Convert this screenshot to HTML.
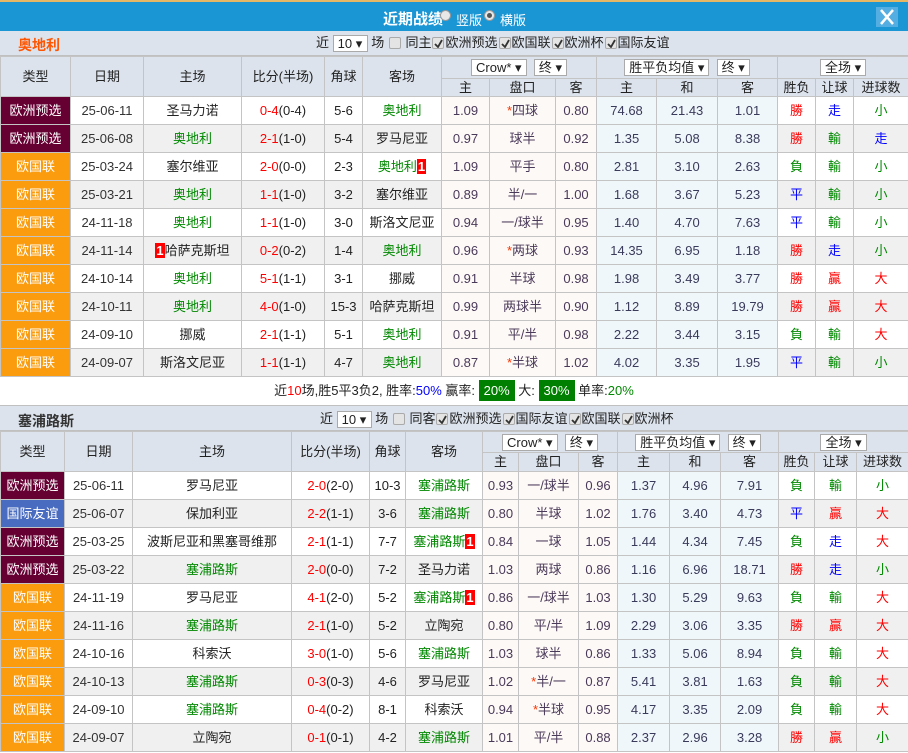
<!DOCTYPE html>
<html><head><meta charset="utf-8"><style>
*{margin:0;padding:0;box-sizing:border-box}
body{width:908px;height:753px;overflow:hidden;background:#fff;font-family:"Liberation Sans","Noto Sans CJK SC",sans-serif;font-size:13px;color:#222;position:relative}
.title{position:absolute;left:0;top:0;width:908px;height:31px;background:#1b96d5;border-top:2px solid #e6b865;color:#fff}
.title .t{position:absolute;left:383px;top:6px;font-weight:bold;font-size:15px}
.radio{position:absolute;width:11px;height:11px;border-radius:50%;background:#e8e8e8;border:1px solid #999;top:8px}
.radio.on::after{content:"";position:absolute;left:2px;top:2px;width:5px;height:5px;border-radius:50%;background:#555}
.title .l{position:absolute;top:8px;font-size:13px}
.close{position:absolute;left:876px;top:5px;width:22px;height:20px;background:#55aee2}
.sec{position:absolute;left:0;width:908px;background:#dce3ec;border-bottom:1px solid #c0c0c0}
.team{position:absolute;left:18px;font-weight:bold;font-size:14px}
.ctl{position:absolute;font-size:13px;white-space:nowrap;color:#222;line-height:18px}
.sel{display:inline-block;background:#fff;border:1px solid #aaa;height:17px;line-height:15px;padding:0 4px;vertical-align:middle;font-size:13px}
.cb{display:inline-block;width:12px;height:12px;border:1px solid #aaa;background:#e4e4e4;border-radius:2px;vertical-align:-2px;margin:0 1px;position:relative}
.cb svg{position:absolute;left:1px;top:1px}
table{position:absolute;left:0;width:908px;border-collapse:collapse;table-layout:fixed}
td,th{border:1px solid #c4c4c4;text-align:center;font-weight:normal;white-space:nowrap;overflow:hidden;padding:0;line-height:16px}
th{background:#dce3ec;color:#222}
tr.d td{height:28px}
tr.e td{background:#f0f0f0}
td.a{background:#fdf9f6!important;color:#4a3a5a}
td.u{background:#f0f7fb!important;color:#3a3a5a}
.ty1{background:#660033!important;color:#fff}
.ty2{background:#fa9c0e!important;color:#fff}
.ty3{background:#4a6cc0!important;color:#fff}
.r{color:#f00}.g{color:#080}.b{color:#00f}.n{color:#333}
.one{background:#f00;color:#fff;font-weight:bold;padding:0 1px}
.st{color:#f30}
.sum{position:absolute;left:0;top:377px;width:908px;height:28px;line-height:28px;text-align:center;font-size:13px}
.gb{background:#008000;color:#fff;padding:3px 5px}
</style></head><body>
<div class="title"><span class="t">近期战绩</span><span class="radio" style="left:440px"></span><span class="l" style="left:456px">竖版</span><span class="radio on" style="left:484px"></span><span class="l" style="left:500px">横版</span>
<div class="close"><svg width="22" height="20"><path d="M5 3L17 17M17 3L5 17" stroke="#fff" stroke-width="2.5"/></svg></div></div>

<div class="sec" style="top:31px;height:25px"><span class="team" style="top:4px;color:#f50">奥地利</span>
<div class="ctl" style="left:316px;top:3px">近 <span class="sel" style="width:35px">10 ▾</span> 场 <span class="cb"></span> 同主<span class="cb"><svg width="9" height="9"><path d="M1 5L4 8L8 1" stroke="#333" stroke-width="1.8" fill="none"/></svg></span>欧洲预选<span class="cb"><svg width="9" height="9"><path d="M1 5L4 8L8 1" stroke="#333" stroke-width="1.8" fill="none"/></svg></span>欧国联<span class="cb"><svg width="9" height="9"><path d="M1 5L4 8L8 1" stroke="#333" stroke-width="1.8" fill="none"/></svg></span>欧洲杯<span class="cb"><svg width="9" height="9"><path d="M1 5L4 8L8 1" stroke="#333" stroke-width="1.8" fill="none"/></svg></span>国际友谊</div></div>

<table style="top:56px">
<colgroup><col style="width:70px"><col style="width:73px"><col style="width:98px"><col style="width:83px"><col style="width:38px"><col style="width:79px"><col style="width:48px"><col style="width:66px"><col style="width:41px"><col style="width:60px"><col style="width:61px"><col style="width:60px"><col style="width:38px"><col style="width:38px"><col style="width:55px"></colgroup>
<tr style="height:22px"><th rowspan="2" style="height:40px">类型</th><th rowspan="2">日期</th><th rowspan="2">主场</th><th rowspan="2">比分(半场)</th><th rowspan="2">角球</th><th rowspan="2">客场</th><th colspan="3" style="height:22px"><span class="sel">Crow* ▾</span>&nbsp;&nbsp;<span class="sel">终 ▾</span></th><th colspan="3"><span class="sel">胜平负均值 ▾</span>&nbsp;&nbsp;<span class="sel">终 ▾</span></th><th colspan="3"><span class="sel">全场 ▾</span></th></tr>
<tr style="height:18px"><th style="height:18px">主</th><th>盘口</th><th>客</th><th>主</th><th>和</th><th>客</th><th>胜负</th><th>让球</th><th>进球数</th></tr>
<tr class="d"><td class="ty1">欧洲预选</td><td class="n">25-06-11</td><td>圣马力诺</td><td><span class="r">0-4</span>(0-4)</td><td>5-6</td><td class="g">奥地利</td><td class="a">1.09</td><td class="a"><span class="st">*</span>四球</td><td class="a">0.80</td><td class="u">74.68</td><td class="u">21.43</td><td class="u">1.01</td><td class="r">勝</td><td class="b">走</td><td class="g">小</td></tr>
<tr class="d e"><td class="ty1">欧洲预选</td><td class="n">25-06-08</td><td class="g">奥地利</td><td><span class="r">2-1</span>(1-0)</td><td>5-4</td><td>罗马尼亚</td><td class="a">0.97</td><td class="a">球半</td><td class="a">0.92</td><td class="u">1.35</td><td class="u">5.08</td><td class="u">8.38</td><td class="r">勝</td><td class="g">輸</td><td class="b">走</td></tr>
<tr class="d"><td class="ty2">欧国联</td><td class="n">25-03-24</td><td>塞尔维亚</td><td><span class="r">2-0</span>(0-0)</td><td>2-3</td><td class="g">奥地利<span class="one">1</span></td><td class="a">1.09</td><td class="a">平手</td><td class="a">0.80</td><td class="u">2.81</td><td class="u">3.10</td><td class="u">2.63</td><td class="g">負</td><td class="g">輸</td><td class="g">小</td></tr>
<tr class="d e"><td class="ty2">欧国联</td><td class="n">25-03-21</td><td class="g">奥地利</td><td><span class="r">1-1</span>(1-0)</td><td>3-2</td><td>塞尔维亚</td><td class="a">0.89</td><td class="a">半/一</td><td class="a">1.00</td><td class="u">1.68</td><td class="u">3.67</td><td class="u">5.23</td><td class="b">平</td><td class="g">輸</td><td class="g">小</td></tr>
<tr class="d"><td class="ty2">欧国联</td><td class="n">24-11-18</td><td class="g">奥地利</td><td><span class="r">1-1</span>(1-0)</td><td>3-0</td><td>斯洛文尼亚</td><td class="a">0.94</td><td class="a">一/球半</td><td class="a">0.95</td><td class="u">1.40</td><td class="u">4.70</td><td class="u">7.63</td><td class="b">平</td><td class="g">輸</td><td class="g">小</td></tr>
<tr class="d e"><td class="ty2">欧国联</td><td class="n">24-11-14</td><td><span class="one">1</span>哈萨克斯坦</td><td><span class="r">0-2</span>(0-2)</td><td>1-4</td><td class="g">奥地利</td><td class="a">0.96</td><td class="a"><span class="st">*</span>两球</td><td class="a">0.93</td><td class="u">14.35</td><td class="u">6.95</td><td class="u">1.18</td><td class="r">勝</td><td class="b">走</td><td class="g">小</td></tr>
<tr class="d"><td class="ty2">欧国联</td><td class="n">24-10-14</td><td class="g">奥地利</td><td><span class="r">5-1</span>(1-1)</td><td>3-1</td><td>挪威</td><td class="a">0.91</td><td class="a">半球</td><td class="a">0.98</td><td class="u">1.98</td><td class="u">3.49</td><td class="u">3.77</td><td class="r">勝</td><td class="r">贏</td><td class="r">大</td></tr>
<tr class="d e"><td class="ty2">欧国联</td><td class="n">24-10-11</td><td class="g">奥地利</td><td><span class="r">4-0</span>(1-0)</td><td>15-3</td><td>哈萨克斯坦</td><td class="a">0.99</td><td class="a">两球半</td><td class="a">0.90</td><td class="u">1.12</td><td class="u">8.89</td><td class="u">19.79</td><td class="r">勝</td><td class="r">贏</td><td class="r">大</td></tr>
<tr class="d"><td class="ty2">欧国联</td><td class="n">24-09-10</td><td>挪威</td><td><span class="r">2-1</span>(1-1)</td><td>5-1</td><td class="g">奥地利</td><td class="a">0.91</td><td class="a">平/半</td><td class="a">0.98</td><td class="u">2.22</td><td class="u">3.44</td><td class="u">3.15</td><td class="g">負</td><td class="g">輸</td><td class="r">大</td></tr>
<tr class="d e"><td class="ty2">欧国联</td><td class="n">24-09-07</td><td>斯洛文尼亚</td><td><span class="r">1-1</span>(1-1)</td><td>4-7</td><td class="g">奥地利</td><td class="a">0.87</td><td class="a"><span class="st">*</span>半球</td><td class="a">1.02</td><td class="u">4.02</td><td class="u">3.35</td><td class="u">1.95</td><td class="b">平</td><td class="g">輸</td><td class="g">小</td></tr>
</table>

<div class="sum">近<span class="r">10</span>场,胜5平3负2, 胜率:<span class="b">50%</span> 赢率: <span class="gb">20%</span> 大: <span class="gb">30%</span> 单率:<span class="g">20%</span></div>

<div class="sec" style="top:405px;height:26px;border-top:1px solid #c0c0c0"><span class="team" style="top:5px;color:#333">塞浦路斯</span>
<div class="ctl" style="left:320px;top:4px">近 <span class="sel" style="width:35px">10 ▾</span> 场 <span class="cb"></span> 同客<span class="cb"><svg width="9" height="9"><path d="M1 5L4 8L8 1" stroke="#333" stroke-width="1.8" fill="none"/></svg></span>欧洲预选<span class="cb"><svg width="9" height="9"><path d="M1 5L4 8L8 1" stroke="#333" stroke-width="1.8" fill="none"/></svg></span>国际友谊<span class="cb"><svg width="9" height="9"><path d="M1 5L4 8L8 1" stroke="#333" stroke-width="1.8" fill="none"/></svg></span>欧国联<span class="cb"><svg width="9" height="9"><path d="M1 5L4 8L8 1" stroke="#333" stroke-width="1.8" fill="none"/></svg></span>欧洲杯</div></div>

<table style="top:431px">
<colgroup><col style="width:64px"><col style="width:68px"><col style="width:159px"><col style="width:78px"><col style="width:36px"><col style="width:77px"><col style="width:36px"><col style="width:60px"><col style="width:39px"><col style="width:52px"><col style="width:51px"><col style="width:58px"><col style="width:36px"><col style="width:42px"><col style="width:52px"></colgroup>
<tr style="height:21px"><th rowspan="2" style="height:40px">类型</th><th rowspan="2">日期</th><th rowspan="2">主场</th><th rowspan="2">比分(半场)</th><th rowspan="2">角球</th><th rowspan="2">客场</th><th colspan="3" style="height:21px"><span class="sel">Crow* ▾</span>&nbsp;&nbsp;<span class="sel">终 ▾</span></th><th colspan="3"><span class="sel">胜平负均值 ▾</span>&nbsp;&nbsp;<span class="sel">终 ▾</span></th><th colspan="3"><span class="sel">全场 ▾</span></th></tr>
<tr style="height:19px"><th style="height:19px">主</th><th>盘口</th><th>客</th><th>主</th><th>和</th><th>客</th><th>胜负</th><th>让球</th><th>进球数</th></tr>
<tr class="d"><td class="ty1">欧洲预选</td><td class="n">25-06-11</td><td>罗马尼亚</td><td><span class="r">2-0</span>(2-0)</td><td>10-3</td><td class="g">塞浦路斯</td><td class="a">0.93</td><td class="a">一/球半</td><td class="a">0.96</td><td class="u">1.37</td><td class="u">4.96</td><td class="u">7.91</td><td class="g">負</td><td class="g">輸</td><td class="g">小</td></tr>
<tr class="d e"><td class="ty3">国际友谊</td><td class="n">25-06-07</td><td>保加利亚</td><td><span class="r">2-2</span>(1-1)</td><td>3-6</td><td class="g">塞浦路斯</td><td class="a">0.80</td><td class="a">半球</td><td class="a">1.02</td><td class="u">1.76</td><td class="u">3.40</td><td class="u">4.73</td><td class="b">平</td><td class="r">贏</td><td class="r">大</td></tr>
<tr class="d"><td class="ty1">欧洲预选</td><td class="n">25-03-25</td><td>波斯尼亚和黑塞哥维那</td><td><span class="r">2-1</span>(1-1)</td><td>7-7</td><td class="g">塞浦路斯<span class="one">1</span></td><td class="a">0.84</td><td class="a">一球</td><td class="a">1.05</td><td class="u">1.44</td><td class="u">4.34</td><td class="u">7.45</td><td class="g">負</td><td class="b">走</td><td class="r">大</td></tr>
<tr class="d e"><td class="ty1">欧洲预选</td><td class="n">25-03-22</td><td class="g">塞浦路斯</td><td><span class="r">2-0</span>(0-0)</td><td>7-2</td><td>圣马力诺</td><td class="a">1.03</td><td class="a">两球</td><td class="a">0.86</td><td class="u">1.16</td><td class="u">6.96</td><td class="u">18.71</td><td class="r">勝</td><td class="b">走</td><td class="g">小</td></tr>
<tr class="d"><td class="ty2">欧国联</td><td class="n">24-11-19</td><td>罗马尼亚</td><td><span class="r">4-1</span>(2-0)</td><td>5-2</td><td class="g">塞浦路斯<span class="one">1</span></td><td class="a">0.86</td><td class="a">一/球半</td><td class="a">1.03</td><td class="u">1.30</td><td class="u">5.29</td><td class="u">9.63</td><td class="g">負</td><td class="g">輸</td><td class="r">大</td></tr>
<tr class="d e"><td class="ty2">欧国联</td><td class="n">24-11-16</td><td class="g">塞浦路斯</td><td><span class="r">2-1</span>(1-0)</td><td>5-2</td><td>立陶宛</td><td class="a">0.80</td><td class="a">平/半</td><td class="a">1.09</td><td class="u">2.29</td><td class="u">3.06</td><td class="u">3.35</td><td class="r">勝</td><td class="r">贏</td><td class="r">大</td></tr>
<tr class="d"><td class="ty2">欧国联</td><td class="n">24-10-16</td><td>科索沃</td><td><span class="r">3-0</span>(1-0)</td><td>5-6</td><td class="g">塞浦路斯</td><td class="a">1.03</td><td class="a">球半</td><td class="a">0.86</td><td class="u">1.33</td><td class="u">5.06</td><td class="u">8.94</td><td class="g">負</td><td class="g">輸</td><td class="r">大</td></tr>
<tr class="d e"><td class="ty2">欧国联</td><td class="n">24-10-13</td><td class="g">塞浦路斯</td><td><span class="r">0-3</span>(0-3)</td><td>4-6</td><td>罗马尼亚</td><td class="a">1.02</td><td class="a"><span class="st">*</span>半/一</td><td class="a">0.87</td><td class="u">5.41</td><td class="u">3.81</td><td class="u">1.63</td><td class="g">負</td><td class="g">輸</td><td class="r">大</td></tr>
<tr class="d"><td class="ty2">欧国联</td><td class="n">24-09-10</td><td class="g">塞浦路斯</td><td><span class="r">0-4</span>(0-2)</td><td>8-1</td><td>科索沃</td><td class="a">0.94</td><td class="a"><span class="st">*</span>半球</td><td class="a">0.95</td><td class="u">4.17</td><td class="u">3.35</td><td class="u">2.09</td><td class="g">負</td><td class="g">輸</td><td class="r">大</td></tr>
<tr class="d e"><td class="ty2">欧国联</td><td class="n">24-09-07</td><td>立陶宛</td><td><span class="r">0-1</span>(0-1)</td><td>4-2</td><td class="g">塞浦路斯</td><td class="a">1.01</td><td class="a">平/半</td><td class="a">0.88</td><td class="u">2.37</td><td class="u">2.96</td><td class="u">3.28</td><td class="r">勝</td><td class="r">贏</td><td class="g">小</td></tr>
</table>
</body></html>
